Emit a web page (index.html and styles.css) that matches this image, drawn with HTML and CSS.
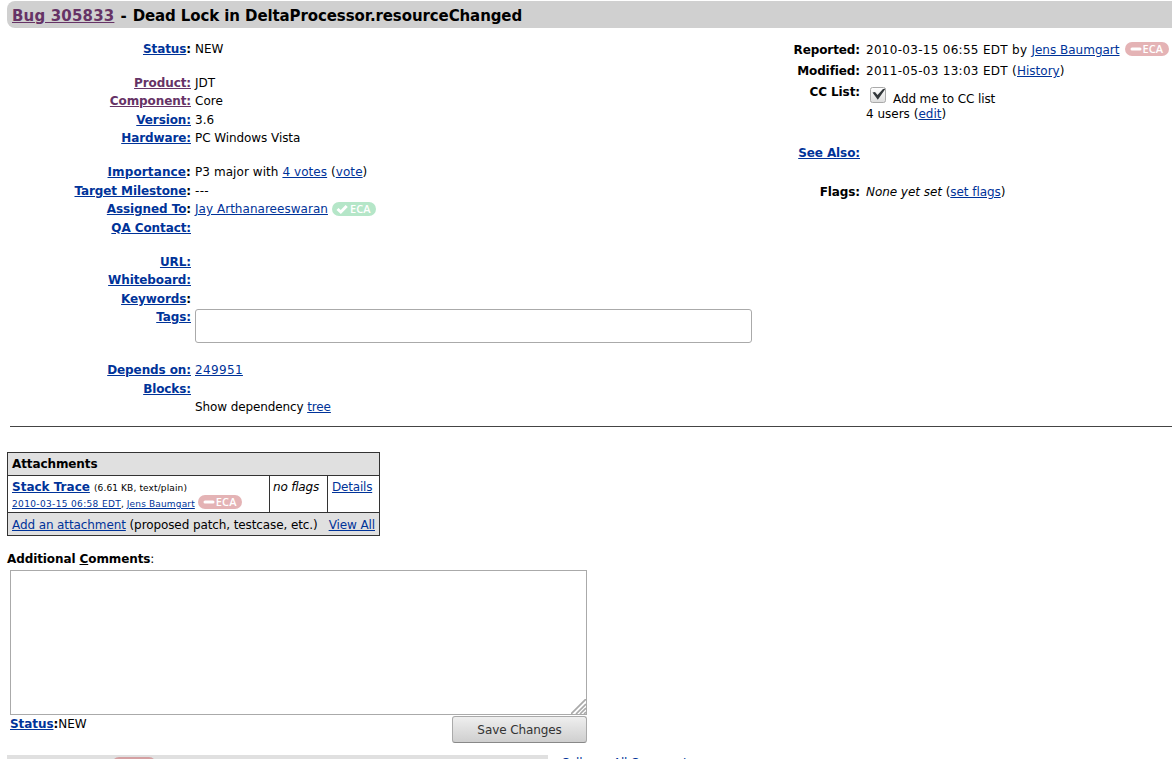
FILE: index.html
```html
<!DOCTYPE html>
<html lang="en">
<head>
<meta charset="utf-8">
<title>Bug 305833</title>
<link rel="stylesheet" href="styles.css">
</head>
<body>
<svg class="defs" width="0" height="0">
  <symbol id="minus" viewBox="0 0 44 14"><rect width="44" height="14" rx="7"/><path d="M7 7h8" stroke="#fff" stroke-width="3" stroke-linecap="round"/></symbol>
  <symbol id="check" viewBox="0 0 44 14"><rect width="44" height="14" rx="7"/><path d="M5.500 7l3.300 3L14.700 4" fill="none" stroke="#fff" stroke-width="3"/></symbol>
</svg>
<header class="title"><a class="visited" href="#">Bug 305833</a><span>-</span><span class="summary">Dead Lock in DeltaProcessor.resourceChanged</span></header>
<main>
<div class="overview">
  <section class="fields">
    <div class="row"><b class="label"><a href="#">Status</a>:</b><span>NEW</span></div>
    <div class="gap"></div>
    <div class="row"><b class="label"><a class="visited" href="#">Product:</a></b><span>JDT</span></div>
    <div class="row"><b class="label"><a class="visited" href="#">Component:</a></b><span>Core</span></div>
    <div class="row"><b class="label"><a href="#">Version:</a></b><span>3.6</span></div>
    <div class="row"><b class="label"><a href="#">Hardware:</a></b><span class="hardware">PC Windows Vista</span></div>
    <div class="gap"></div>
    <div class="row"><b class="label wide"><a href="#">Importance</a>:</b><span class="importance">P3 major with <a href="#">4 votes</a> (<a href="#">vote</a>)</span></div>
    <div class="row"><b class="label"><a href="#">Target Milestone</a>:</b><span class="number">---</span></div>
    <div class="row"><b class="label"><a href="#">Assigned To</a>:</b><span class="person"><a href="#">Jay Arthanareeswaran</a></span><span class="eca signed"><svg><use href="#check"/></svg><i>ECA</i></span></div>
    <div class="row"><b class="label"><a href="#">QA Contact:</a></b></div>
    <div class="gap"></div>
    <div class="row"><b class="label"><a href="#">URL:</a></b></div>
    <div class="row"><b class="label"><a href="#">Whiteboard:</a></b></div>
    <div class="row"><b class="label"><a href="#">Keywords</a>:</b></div>
    <div class="row tags"><b class="label"><a href="#">Tags:</a></b><input class="tag-input" type="text" aria-label="Tags"></div>
    <div class="row"><b class="label"><a href="#">Depends on:</a></b><a class="number" href="#">249951</a></div>
    <div class="row"><b class="label"><a href="#">Blocks:</a></b></div>
    <div class="row"><b class="label"></b><span class="tight">Show dependency <a href="#">tree</a></span></div>
  </section>
  <section class="meta">
    <div class="row"><b class="label">Reported:</b><span><span class="date">2010-03-15 06:55 EDT by </span><a href="#">Jens Baumgart</a></span><span class="eca"><svg><use href="#minus"/></svg><i>ECA</i></span></div>
    <div class="row"><b class="label">Modified:</b><span><span class="date">2011-05-03 13:03 EDT (</span><a href="#">History</a>)</span></div>
    <div class="row cc"><b class="label">CC List:</b><div><div class="cc-add"><svg class="checkbox" viewBox="0 0 18 18"><defs><linearGradient id="box" x2="0" y2="1"><stop stop-color="#fff"/><stop offset="1" stop-color="#ddd"/></linearGradient></defs><rect x="1.500" y="1.500" width="15" height="15" rx="2" fill="url(#box)" stroke="#aaa"/><path d="M3.500 6.500l2.500-.5 2.500 3L14 3l2.500-.2L8.800 13.800z" fill="#33383b"/></svg><span class="tight">Add me to CC list</span></div><div class="users">4 users (<a href="#">edit</a>)</div></div></div>
    <div class="row also"><b class="label"><a href="#">See Also:</a></b></div>
    <div class="row"><b class="label">Flags:</b><span class="flags"><em>None yet set</em> (<a href="#">set flags</a>)</span></div>
  </section>
</div>
<hr>
<div class="attachments">
  <div class="att-head">Attachments</div>
  <div class="att-row">
    <div class="att-file"><div class="file-line"><a class="file" href="#">Stack Trace</a><small class="size">(6.61 KB, text/plain)</small></div><div class="by-line"><small><a class="stamp" href="#">2010-03-15 06:58 EDT</a>, <a class="by" href="#">Jens Baumgart</a></small><span class="eca"><svg><use href="#minus"/></svg><i>ECA</i></span></div></div>
    <div class="att-flags"><em>no flags</em></div>
    <div class="att-details"><a href="#">Details</a></div>
  </div>
  <div class="att-foot"><span class="add"><a href="#">Add an attachment</a> (proposed patch, testcase, etc.)</span><a class="view" href="#">View All</a></div>
</div>
<div class="comment-label"><b>Additional <u>C</u>omments</b>:</div>
<div class="comment-form">
  <div class="textarea"><svg width="15" height="15" viewBox="0 0 15 15"><path d="M0 15L15 0M5 15L15 5M9 15l6-6M13 15l2-2" stroke="#aaa" stroke-width="1.700"/></svg></div>
  <div class="actions"><div class="status"><b><a href="#">Status</a>:</b>NEW</div><button>Save Changes</button></div>
</div>
<div class="thread"><div class="comment-head"><span class="eca"><svg><use href="#minus"/></svg><i>ECA</i></span></div><a class="collapse" href="#">Collapse All Comments</a></div>
</main>
</body>
</html>
```
FILE: styles.css
```css
* { box-sizing: border-box; }
html, body { margin: 0; height: 759px; overflow: hidden; }
body { background: #fff; color: #000; font: 12px/18px "DejaVu Sans", Verdana, sans-serif; white-space: nowrap; }
a { color: #039; }
a.visited { color: #636; }
i { font-style: normal; }
.defs { display: block; }
.title { margin: 1px 0 0 7px; height: 27px; padding-left: 5px; background: #d0d0d0; border-radius: 8px 0 0 8px; font-size: 15px; line-height: 30px; font-weight: bold; display: flex; gap: 6px; }
.title a { letter-spacing: 0.17px; }
.summary { letter-spacing: -0.1px; }
.overview { display: flex; height: 398px; }
.fields { width: 760px; padding-top: 11.6px; }
.row { display: flex; height: 18.5px; gap: 4px; }
.label { letter-spacing: -0.1px; }
.fields .label { width: 191px; text-align: right; }
.fields .label.wide { letter-spacing: 0.12px; }
.gap { height: 15.5px; }
.fields .tags { height: 53px; }
.tag-input { width: 557px; height: 34px; border: 1px solid #aaa; border-radius: 3px; background: #fff; margin-top: 1px; }
.hardware { letter-spacing: -0.07px; }
.importance { letter-spacing: 0.07px; }
.person { letter-spacing: 0.03px; }
.number { letter-spacing: 0.35px; }
.tight { letter-spacing: -0.11px; }
.date { letter-spacing: 0.29px; white-space: pre; }
.flags { letter-spacing: -0.05px; }
.eca { display: inline-flex; position: relative; width: 44px; height: 14px; color: #fff; fill: #e4b3b5; margin: 2px 0 0 1px; font: 600 11px/14px "Open Sans", sans-serif; letter-spacing: 0.1px; }
.eca svg { position: absolute; inset: 0; width: 44px; height: 14px; }
.eca i { position: relative; margin-left: 18px; }
.eca.signed { fill: #b5e6c8; margin-left: 0; }
.meta { padding-top: 13px; flex: 1; }
.meta .row { gap: 6px; height: 21px; }
.meta .label { width: 100px; text-align: right; }
.meta .eca { margin: 1px 0 0 -1px; }
.meta .cc { height: 61px; }
.meta .also { height: 39px; }
.cc-add { display: flex; height: 22px; gap: 6px; }
.cc-add span { padding-top: 7px; }
.checkbox { width: 18px; height: 18px; margin: 3px 0 0 3px; }
hr { margin: 0 0 0 10px; border: 0; height: 1px; background: #444; }
.attachments { width: 373px; height: 84px; margin: 25px 0 0 7px; border: 1px solid #333; }
.att-head { height: 23px; background: #e0e0e0; padding: 2px 4px; font-weight: bold; letter-spacing: -0.1px; border-bottom: 1px solid #333; }
.att-row { display: flex; height: 37px; border-bottom: 1px solid #333; }
.att-file { width: 262px; padding: 2px 4px; border-right: 1px solid #333; }
.file-line { display: flex; height: 15px; gap: 4px; }
.file { font-weight: bold; }
small { font-size: 9px; }
.size { line-height: 20px; letter-spacing: 0.13px; }
.by-line { display: flex; gap: 3px; padding-top: 2px; }
.by-line .eca { margin: 0; }
.stamp { letter-spacing: 0.35px; }
.by { letter-spacing: 0.15px; }
.att-flags { width: 58px; padding: 2px 3px; letter-spacing: -0.2px; border-right: 1px solid #333; }
.att-details { padding: 2px 4px; letter-spacing: -0.2px; }
.att-foot { display: flex; justify-content: space-between; height: 22px; padding: 3px 4px; background: #e0e0e0; }
.add { letter-spacing: -0.1px; }
.view { letter-spacing: -0.1px; }
.comment-label { margin: 14px 0 0 7px; letter-spacing: -0.1px; }
.comment-form { width: 577px; margin: 2px 0 0 10px; }
.textarea { display: flex; justify-content: flex-end; align-items: flex-end; height: 145px; border: 1px solid #aaa; }
.actions { display: flex; justify-content: space-between; height: 40px; }
.status { letter-spacing: -0.07px; }
button { width: 135px; height: 27px; margin-top: 1px; border: 1px solid #aaa; border-bottom-color: #888; border-radius: 3px; background: linear-gradient(#efefef, #e5e5e5 30%, #cfcfcf); color: #333; font: inherit; letter-spacing: -0.1px; }
.thread { display: flex; gap: 13px; height: 4px; margin-left: 7px; }
.comment-head { width: 541px; background: #e0e0e0; height: 10px; }
.comment-head .eca { margin: 2px 0 0 105px; fill: #d4a0a2; }
.collapse { line-height: 16px; letter-spacing: -0.3px; }
```
